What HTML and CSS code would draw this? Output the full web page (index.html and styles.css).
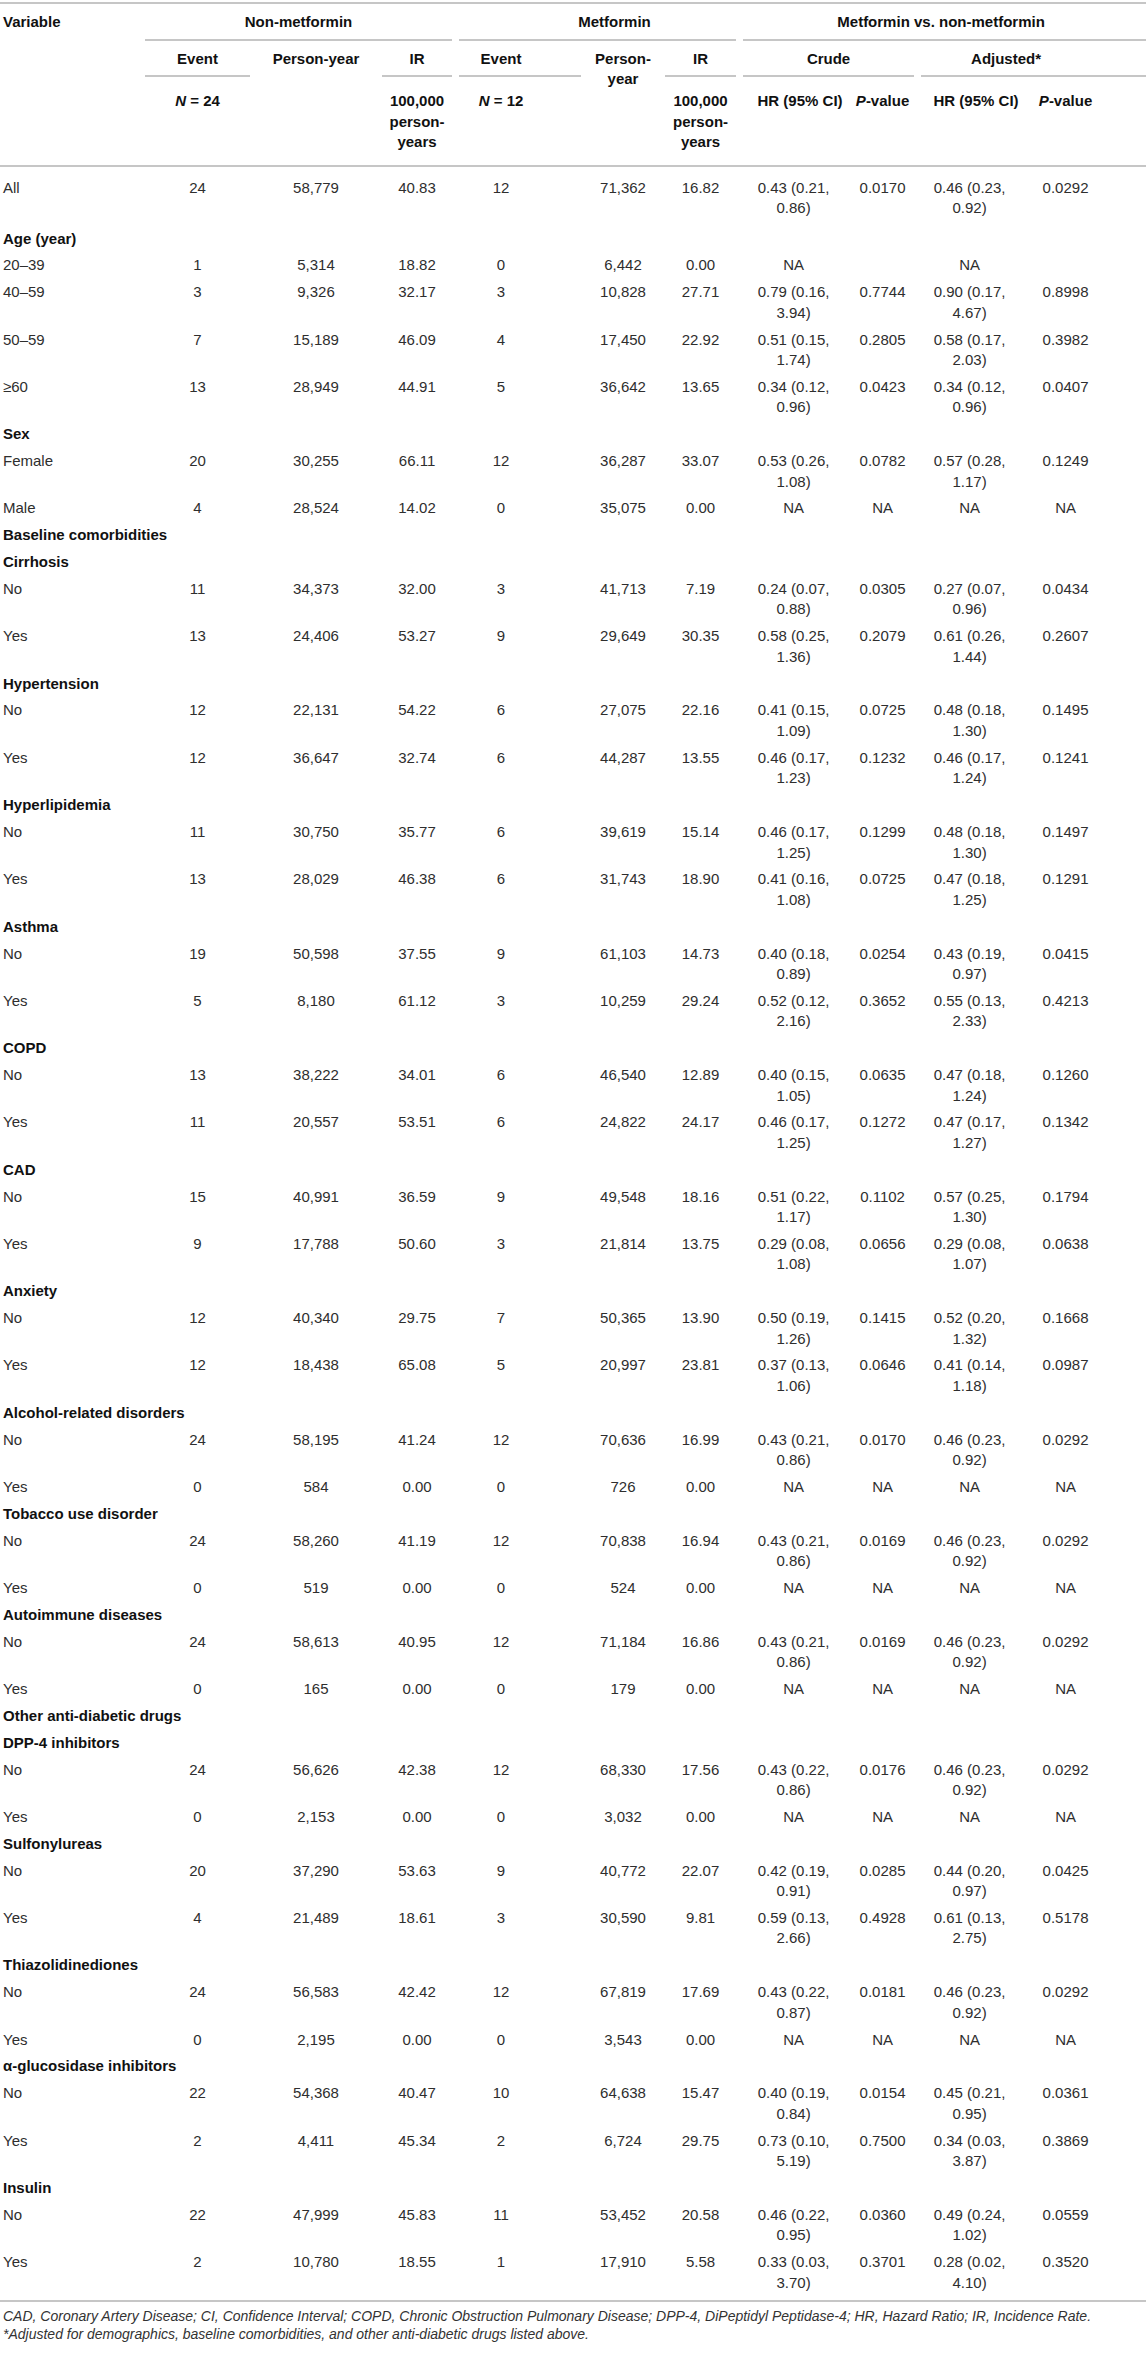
FILE: index.html
```html
<!DOCTYPE html>
<html lang="en">
<head>
    <meta charset="UTF-8">
    <meta name="viewport" content="width=device-width, initial-scale=1.0">
    <title>Metformin and incidence - results table</title>
    <link rel="stylesheet" href="styles.css">
</head>
<body>

    <!-- Results table -->
    <table class="results">
        <colgroup>
            <col class="w-var">
            <col class="w-event">
            <col class="w-py">
            <col class="w-ir">
            <col class="w-event2">
            <col class="w-py2">
            <col class="w-ir2">
            <col class="w-hr">
            <col class="w-p">
            <col class="w-hr2">
            <col class="w-p2">
        </colgroup>
        <thead>
            <tr class="head-1">
                <th rowspan="3" class="var">Variable</th>
                <th colspan="3" class="rule">Non-metformin</th>
                <th colspan="3" class="rule met">Metformin</th>
                <th colspan="4" class="rule full">Metformin vs. non-metformin</th>
            </tr>
            <tr class="head-2">
                <th class="rule">Event</th>
                <th>Person-year</th>
                <th class="rule">IR</th>
                <th class="rule ev2">Event</th>
                <th rowspan="2">Person-year</th>
                <th class="rule">IR</th>
                <th colspan="2" class="rule">Crude</th>
                <th colspan="2" class="rule full last">Adjusted*</th>
            </tr>
            <tr class="head-3">
                <th><i>N</i> = 24</th>
                <th></th>
                <th>100,000 person-years</th>
                <th class="ev2"><i>N</i> = 12</th>
                <th>100,000 person-years</th>
                <th class="hr">HR (95% CI)</th>
                <th><i>P</i>-value</th>
                <th class="hr">HR (95% CI)</th>
                <th class="p2"><i>P</i>-value</th>
            </tr>
        </thead>
        <tbody>
            <tr><td>All</td><td>24</td><td>58,779</td><td>40.83</td><td>12</td><td>71,362</td><td>16.82</td><td>0.43 (0.21, 0.86)</td><td>0.0170</td><td>0.46 (0.23, 0.92)</td><td>0.0292</td></tr>

            <tr><td colspan="11" class="group">Age (year)</td></tr>
            <tr><td>20–39</td><td>1</td><td>5,314</td><td>18.82</td><td>0</td><td>6,442</td><td>0.00</td><td>NA</td><td></td><td>NA</td><td></td></tr>
            <tr><td>40–59</td><td>3</td><td>9,326</td><td>32.17</td><td>3</td><td>10,828</td><td>27.71</td><td>0.79 (0.16, 3.94)</td><td>0.7744</td><td>0.90 (0.17, 4.67)</td><td>0.8998</td></tr>
            <tr><td>50–59</td><td>7</td><td>15,189</td><td>46.09</td><td>4</td><td>17,450</td><td>22.92</td><td>0.51 (0.15, 1.74)</td><td>0.2805</td><td>0.58 (0.17, 2.03)</td><td>0.3982</td></tr>
            <tr><td>≥60</td><td>13</td><td>28,949</td><td>44.91</td><td>5</td><td>36,642</td><td>13.65</td><td>0.34 (0.12, 0.96)</td><td>0.0423</td><td>0.34 (0.12, 0.96)</td><td>0.0407</td></tr>

            <tr><td colspan="11" class="group">Sex</td></tr>
            <tr><td>Female</td><td>20</td><td>30,255</td><td>66.11</td><td>12</td><td>36,287</td><td>33.07</td><td>0.53 (0.26, 1.08)</td><td>0.0782</td><td>0.57 (0.28, 1.17)</td><td>0.1249</td></tr>
            <tr><td>Male</td><td>4</td><td>28,524</td><td>14.02</td><td>0</td><td>35,075</td><td>0.00</td><td>NA</td><td>NA</td><td>NA</td><td>NA</td></tr>

            <tr><td colspan="11" class="group">Baseline comorbidities</td></tr>
            <tr><td colspan="11" class="group">Cirrhosis</td></tr>
            <tr><td>No</td><td>11</td><td>34,373</td><td>32.00</td><td>3</td><td>41,713</td><td>7.19</td><td>0.24 (0.07, 0.88)</td><td>0.0305</td><td>0.27 (0.07, 0.96)</td><td>0.0434</td></tr>
            <tr><td>Yes</td><td>13</td><td>24,406</td><td>53.27</td><td>9</td><td>29,649</td><td>30.35</td><td>0.58 (0.25, 1.36)</td><td>0.2079</td><td>0.61 (0.26, 1.44)</td><td>0.2607</td></tr>

            <tr><td colspan="11" class="group">Hypertension</td></tr>
            <tr><td>No</td><td>12</td><td>22,131</td><td>54.22</td><td>6</td><td>27,075</td><td>22.16</td><td>0.41 (0.15, 1.09)</td><td>0.0725</td><td>0.48 (0.18, 1.30)</td><td>0.1495</td></tr>
            <tr><td>Yes</td><td>12</td><td>36,647</td><td>32.74</td><td>6</td><td>44,287</td><td>13.55</td><td>0.46 (0.17, 1.23)</td><td>0.1232</td><td>0.46 (0.17, 1.24)</td><td>0.1241</td></tr>

            <tr><td colspan="11" class="group">Hyperlipidemia</td></tr>
            <tr><td>No</td><td>11</td><td>30,750</td><td>35.77</td><td>6</td><td>39,619</td><td>15.14</td><td>0.46 (0.17, 1.25)</td><td>0.1299</td><td>0.48 (0.18, 1.30)</td><td>0.1497</td></tr>
            <tr><td>Yes</td><td>13</td><td>28,029</td><td>46.38</td><td>6</td><td>31,743</td><td>18.90</td><td>0.41 (0.16, 1.08)</td><td>0.0725</td><td>0.47 (0.18, 1.25)</td><td>0.1291</td></tr>

            <tr><td colspan="11" class="group">Asthma</td></tr>
            <tr><td>No</td><td>19</td><td>50,598</td><td>37.55</td><td>9</td><td>61,103</td><td>14.73</td><td>0.40 (0.18, 0.89)</td><td>0.0254</td><td>0.43 (0.19, 0.97)</td><td>0.0415</td></tr>
            <tr><td>Yes</td><td>5</td><td>8,180</td><td>61.12</td><td>3</td><td>10,259</td><td>29.24</td><td>0.52 (0.12, 2.16)</td><td>0.3652</td><td>0.55 (0.13, 2.33)</td><td>0.4213</td></tr>

            <tr><td colspan="11" class="group">COPD</td></tr>
            <tr><td>No</td><td>13</td><td>38,222</td><td>34.01</td><td>6</td><td>46,540</td><td>12.89</td><td>0.40 (0.15, 1.05)</td><td>0.0635</td><td>0.47 (0.18, 1.24)</td><td>0.1260</td></tr>
            <tr><td>Yes</td><td>11</td><td>20,557</td><td>53.51</td><td>6</td><td>24,822</td><td>24.17</td><td>0.46 (0.17, 1.25)</td><td>0.1272</td><td>0.47 (0.17, 1.27)</td><td>0.1342</td></tr>

            <tr><td colspan="11" class="group">CAD</td></tr>
            <tr><td>No</td><td>15</td><td>40,991</td><td>36.59</td><td>9</td><td>49,548</td><td>18.16</td><td>0.51 (0.22, 1.17)</td><td>0.1102</td><td>0.57 (0.25, 1.30)</td><td>0.1794</td></tr>
            <tr><td>Yes</td><td>9</td><td>17,788</td><td>50.60</td><td>3</td><td>21,814</td><td>13.75</td><td>0.29 (0.08, 1.08)</td><td>0.0656</td><td>0.29 (0.08, 1.07)</td><td>0.0638</td></tr>

            <tr><td colspan="11" class="group">Anxiety</td></tr>
            <tr><td>No</td><td>12</td><td>40,340</td><td>29.75</td><td>7</td><td>50,365</td><td>13.90</td><td>0.50 (0.19, 1.26)</td><td>0.1415</td><td>0.52 (0.20, 1.32)</td><td>0.1668</td></tr>
            <tr><td>Yes</td><td>12</td><td>18,438</td><td>65.08</td><td>5</td><td>20,997</td><td>23.81</td><td>0.37 (0.13, 1.06)</td><td>0.0646</td><td>0.41 (0.14, 1.18)</td><td>0.0987</td></tr>

            <tr><td colspan="11" class="group">Alcohol-related disorders</td></tr>
            <tr><td>No</td><td>24</td><td>58,195</td><td>41.24</td><td>12</td><td>70,636</td><td>16.99</td><td>0.43 (0.21, 0.86)</td><td>0.0170</td><td>0.46 (0.23, 0.92)</td><td>0.0292</td></tr>
            <tr><td>Yes</td><td>0</td><td>584</td><td>0.00</td><td>0</td><td>726</td><td>0.00</td><td>NA</td><td>NA</td><td>NA</td><td>NA</td></tr>

            <tr><td colspan="11" class="group">Tobacco use disorder</td></tr>
            <tr><td>No</td><td>24</td><td>58,260</td><td>41.19</td><td>12</td><td>70,838</td><td>16.94</td><td>0.43 (0.21, 0.86)</td><td>0.0169</td><td>0.46 (0.23, 0.92)</td><td>0.0292</td></tr>
            <tr><td>Yes</td><td>0</td><td>519</td><td>0.00</td><td>0</td><td>524</td><td>0.00</td><td>NA</td><td>NA</td><td>NA</td><td>NA</td></tr>

            <tr><td colspan="11" class="group">Autoimmune diseases</td></tr>
            <tr><td>No</td><td>24</td><td>58,613</td><td>40.95</td><td>12</td><td>71,184</td><td>16.86</td><td>0.43 (0.21, 0.86)</td><td>0.0169</td><td>0.46 (0.23, 0.92)</td><td>0.0292</td></tr>
            <tr><td>Yes</td><td>0</td><td>165</td><td>0.00</td><td>0</td><td>179</td><td>0.00</td><td>NA</td><td>NA</td><td>NA</td><td>NA</td></tr>

            <tr><td colspan="11" class="group">Other anti-diabetic drugs</td></tr>
            <tr><td colspan="11" class="group">DPP-4 inhibitors</td></tr>
            <tr><td>No</td><td>24</td><td>56,626</td><td>42.38</td><td>12</td><td>68,330</td><td>17.56</td><td>0.43 (0.22, 0.86)</td><td>0.0176</td><td>0.46 (0.23, 0.92)</td><td>0.0292</td></tr>
            <tr><td>Yes</td><td>0</td><td>2,153</td><td>0.00</td><td>0</td><td>3,032</td><td>0.00</td><td>NA</td><td>NA</td><td>NA</td><td>NA</td></tr>

            <tr><td colspan="11" class="group">Sulfonylureas</td></tr>
            <tr><td>No</td><td>20</td><td>37,290</td><td>53.63</td><td>9</td><td>40,772</td><td>22.07</td><td>0.42 (0.19, 0.91)</td><td>0.0285</td><td>0.44 (0.20, 0.97)</td><td>0.0425</td></tr>
            <tr><td>Yes</td><td>4</td><td>21,489</td><td>18.61</td><td>3</td><td>30,590</td><td>9.81</td><td>0.59 (0.13, 2.66)</td><td>0.4928</td><td>0.61 (0.13, 2.75)</td><td>0.5178</td></tr>

            <tr><td colspan="11" class="group">Thiazolidinediones</td></tr>
            <tr><td>No</td><td>24</td><td>56,583</td><td>42.42</td><td>12</td><td>67,819</td><td>17.69</td><td>0.43 (0.22, 0.87)</td><td>0.0181</td><td>0.46 (0.23, 0.92)</td><td>0.0292</td></tr>
            <tr><td>Yes</td><td>0</td><td>2,195</td><td>0.00</td><td>0</td><td>3,543</td><td>0.00</td><td>NA</td><td>NA</td><td>NA</td><td>NA</td></tr>

            <tr><td colspan="11" class="group">α-glucosidase inhibitors</td></tr>
            <tr><td>No</td><td>22</td><td>54,368</td><td>40.47</td><td>10</td><td>64,638</td><td>15.47</td><td>0.40 (0.19, 0.84)</td><td>0.0154</td><td>0.45 (0.21, 0.95)</td><td>0.0361</td></tr>
            <tr><td>Yes</td><td>2</td><td>4,411</td><td>45.34</td><td>2</td><td>6,724</td><td>29.75</td><td>0.73 (0.10, 5.19)</td><td>0.7500</td><td>0.34 (0.03, 3.87)</td><td>0.3869</td></tr>

            <tr><td colspan="11" class="group">Insulin</td></tr>
            <tr><td>No</td><td>22</td><td>47,999</td><td>45.83</td><td>11</td><td>53,452</td><td>20.58</td><td>0.46 (0.22, 0.95)</td><td>0.0360</td><td>0.49 (0.24, 1.02)</td><td>0.0559</td></tr>
            <tr><td>Yes</td><td>2</td><td>10,780</td><td>18.55</td><td>1</td><td>17,910</td><td>5.58</td><td>0.33 (0.03, 3.70)</td><td>0.3701</td><td>0.28 (0.02, 4.10)</td><td>0.3520</td></tr>
        </tbody>
    </table>

    <!-- Footnotes -->
    <div class="notes">
        <p>CAD, Coronary Artery Disease; CI, Confidence Interval; COPD, Chronic Obstruction Pulmonary Disease; DPP-4, DiPeptidyl Peptidase-4; HR, Hazard Ratio; IR, Incidence Rate.</p>
        <p>*Adjusted for demographics, baseline comorbidities, and other anti-diabetic drugs listed above.</p>
    </div>

</body>
</html>
```

FILE: styles.css
```css
/* Basic reset */
* {
    margin: 0;
    padding: 0;
    box-sizing: border-box;
}

body {
    font-family: "Liberation Sans", Arial, sans-serif;
    font-size: 15px;
    color: #2e2e2e;
    background-color: #fff;
    padding-top: 2px;
    overflow-x: hidden;
}

/* Table */
.results {
    width: 1146px;
    table-layout: fixed;
    border-collapse: separate;
    border-spacing: 0;
    border-top: 2px solid #c6c6c6;
    line-height: 20.5px;
}

.w-var { width: 145px; }
.w-event { width: 112px; }
.w-py { width: 125px; }
.w-ir { width: 77px; }
.w-event2 { width: 129px; }
.w-py2 { width: 77px; }
.w-ir2 { width: 78px; }
.w-hr { width: 108px; }
.w-p { width: 70px; }
.w-hr2 { width: 104px; }
.w-p2 { width: 121px; }

/* Header */
.results th {
    font-weight: bold;
    color: #111;
    text-align: center;
    vertical-align: top;
    padding: 8px 7px 8px 0;
}

.results th.var {
    text-align: left;
    padding-left: 3px;
}

.results th.met {
    padding-left: 34px;
}

.results th.ev2 {
    padding-right: 45px;
}

.results th.last {
    padding-right: 55px;
}

.results th.hr {
    padding-left: 6px;
    padding-right: 0;
}

.results th.p2 {
    padding-right: 40px;
}

.head-3 th {
    padding-top: 14px;
    padding-bottom: 12px;
}

/* Grey rule under a header group, stops short of the next column */
.rule {
    background: linear-gradient(#c6c6c6, #c6c6c6) left bottom / calc(100% - 7px) 2px no-repeat;
}

.rule.full {
    background-size: 100% 2px;
}

/* Body */
.results td {
    text-align: center;
    vertical-align: top;
    padding: 3px 7px 3.35px 0;
}

.results td:first-child {
    text-align: left;
    padding-left: 3px;
}

.results td:nth-child(5) {
    padding-right: 45px;
}

.results td:nth-child(11) {
    padding-right: 40px;
}

.results td.group {
    font-weight: bold;
    color: #111;
}

tbody tr:first-child td {
    border-top: 2px solid #c6c6c6;
    padding-top: 11px;
    padding-bottom: 7px;
}

tbody tr:last-child td {
    padding-bottom: 7px;
}

/* Footnotes */
.notes {
    width: 1146px;
    border-top: 2px solid #c6c6c6;
    padding: 6px 0 0 3px;
    font-size: 14px;
    line-height: 17.5px;
    font-style: italic;
    color: #333;
}
```
